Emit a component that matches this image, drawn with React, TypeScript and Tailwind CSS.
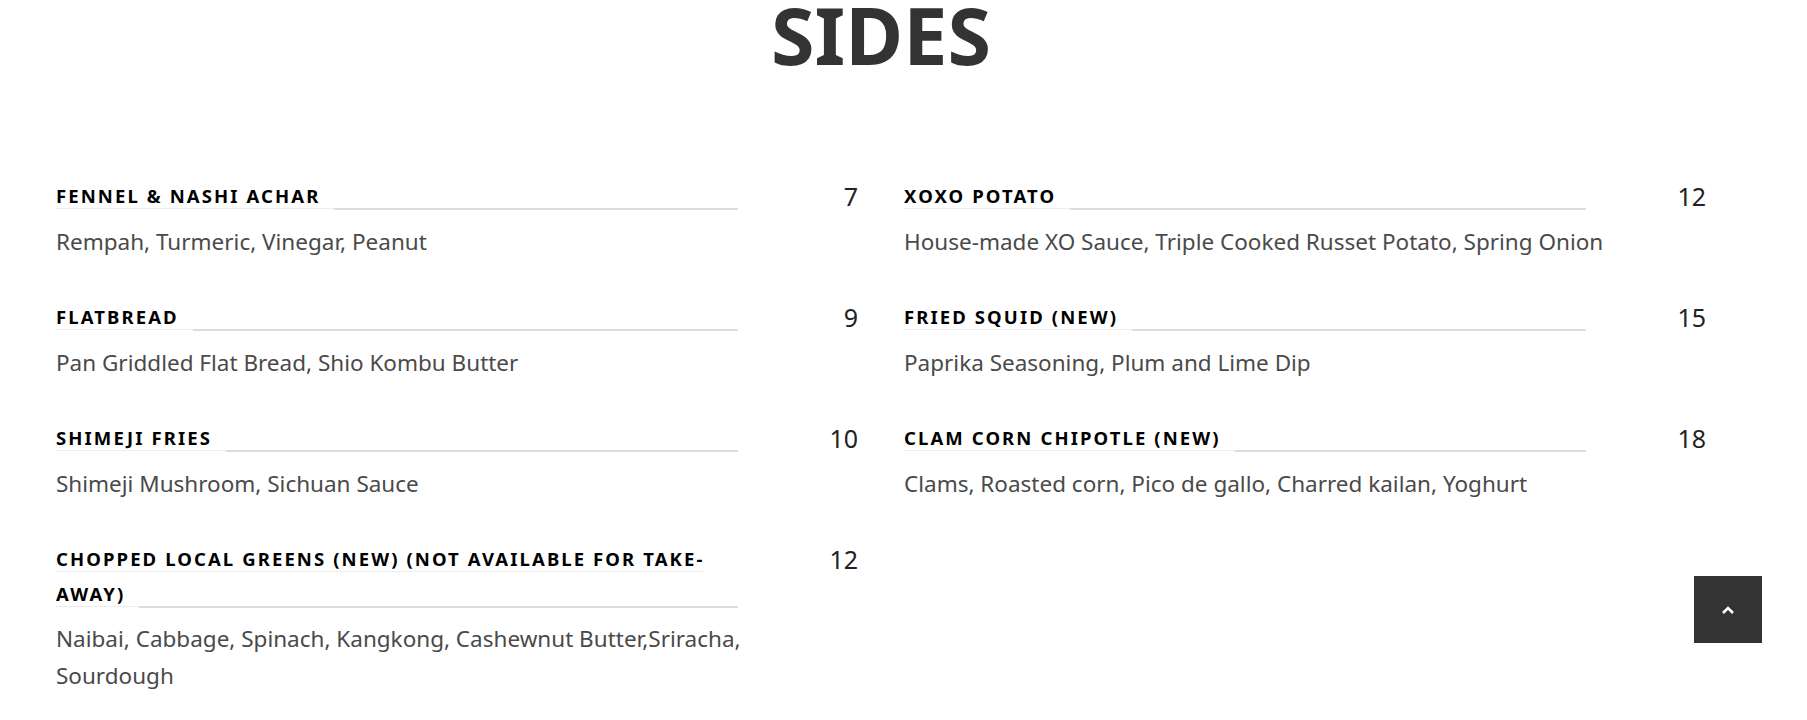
import React from "react";

type Item = { name: string; desc: string; price: string };

const left: Item[] = [
  { name: "FENNEL & NASHI ACHAR", desc: "Rempah, Turmeric, Vinegar, Peanut", price: "7" },
  { name: "FLATBREAD", desc: "Pan Griddled Flat Bread, Shio Kombu Butter", price: "9" },
  { name: "SHIMEJI FRIES", desc: "Shimeji Mushroom, Sichuan Sauce", price: "10" },
  {
    name: "CHOPPED LOCAL GREENS (NEW) (NOT AVAILABLE FOR TAKE-AWAY)",
    desc: "Naibai, Cabbage, Spinach, Kangkong, Cashewnut Butter,Sriracha, Sourdough",
    price: "12",
  },
];

const right: Item[] = [
  { name: "XOXO POTATO", desc: "House-made XO Sauce, Triple Cooked Russet Potato, Spring Onion", price: "12" },
  { name: "FRIED SQUID (NEW)", desc: "Paprika Seasoning, Plum and Lime Dip", price: "15" },
  { name: "CLAM CORN CHIPOTLE (NEW)", desc: "Clams, Roasted corn, Pico de gallo, Charred kailan, Yoghurt", price: "18" },
];

function MenuItem({ item }: { item: Item }) {
  return (
    <div className="mb-[39px]">
      <div className="flex">
        <div className="w-[85%] overflow-hidden">
          <h4 className="text-[18.5px] leading-[35px] font-bold tracking-[2.1px] text-black">
            <span className="pr-[14px] border-b border-[#ececec]">{item.name}</span>
            <span className="inline-block w-full mr-[-100%] h-0 border-b-2 border-[#dddddd] align-[-7px]"></span>
          </h4>
        </div>
        <div className="w-[15%] text-right text-[25px] leading-[36px] text-[#222]">{item.price}</div>
      </div>
      <p className="mt-[9px] w-[90%] text-[22.5px] leading-[37px] text-[#4a4a4a]">{item.desc}</p>
    </div>
  );
}

export default function App() {
  return (
    <div
      className="min-h-[720px] bg-white"
      style={{ fontFamily: '"Noto Sans", "Open Sans", sans-serif' }}
    >
      <div className="ml-[56px] w-[1650px]">
        <h2 className="text-center text-[79px] leading-[70px] font-bold text-[#333]">SIDES</h2>
        <div className="mt-[108px] grid grid-cols-2 gap-x-[46px]">
          <div>
            {left.map((it) => (
              <MenuItem key={it.name} item={it} />
            ))}
          </div>
          <div>
            {right.map((it) => (
              <MenuItem key={it.name} item={it} />
            ))}
          </div>
        </div>
      </div>
      <button className="fixed right-[45px] bottom-[77px] w-[68px] h-[67px] bg-[#333] flex items-center justify-center">
        <svg width="14" height="10" viewBox="0 0 14 10" fill="none">
          <path d="M2 8 L7 3 L12 8" stroke="#fff" strokeWidth="2.6" />
        </svg>
      </button>
    </div>
  );
}
